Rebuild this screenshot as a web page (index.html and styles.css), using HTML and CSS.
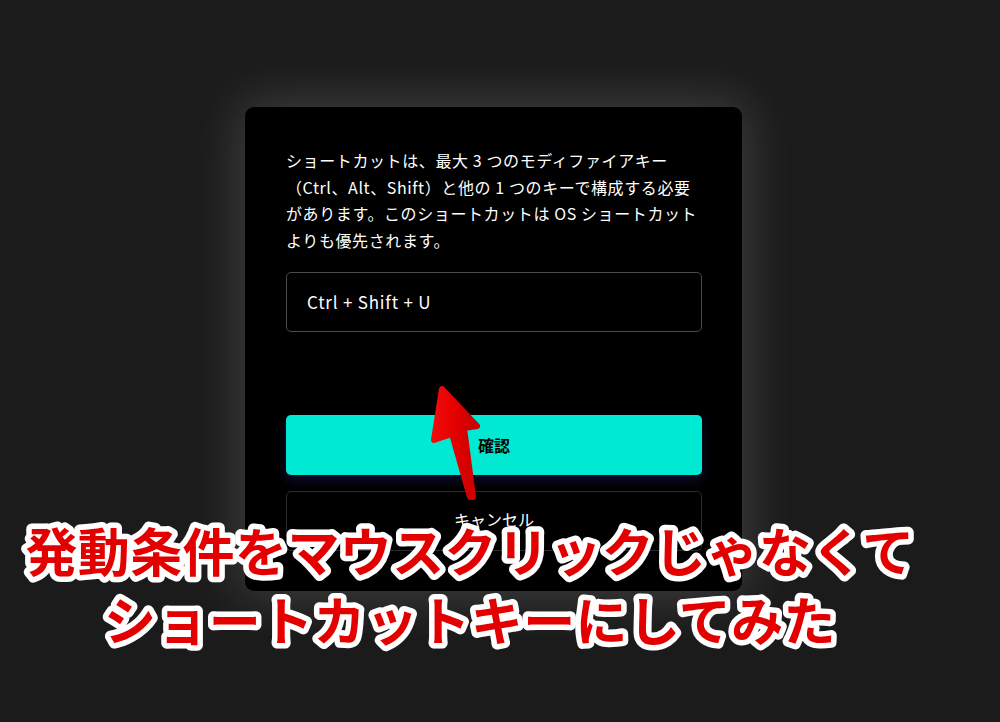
FILE: index.html
```html
<!DOCTYPE html>
<html lang="ja">
<head>
<meta charset="utf-8">
<title>ショートカット設定</title>
<link rel="stylesheet" href="styles.css">
</head>
<body>
<div class="page">
  <div class="card">
    <p class="desc">ショートカットは、最大 3 つのモディファイアキー<br>（Ctrl、Alt、Shift）と他の 1 つのキーで構成する必要<br>があります。このショートカットは OS ショートカット<br>よりも優先されます。</p>
    <div class="keybox">Ctrl + Shift + U</div>
    <div class="spacer"></div>
    <button class="btn btn-primary">確認</button>
    <button class="btn btn-secondary">キャンセル</button>
  </div>
</div>
<svg class="overlay" width="1000" height="722" viewBox="0 0 1000 722">
  <defs>
    <linearGradient id="ag" x1="0" y1="0" x2="1" y2="0">
      <stop offset="0" stop-color="#f20a0a"/>
      <stop offset="0.5" stop-color="#e40000"/>
      <stop offset="1" stop-color="#c80000"/>
    </linearGradient>
  </defs>
  <path class="arrow" d="M442 389 L477 426 L464 428 L473 497 L470 497 L452 434 L434 440 Z"/>
  <text class="caption" x="470" y="572">発動条件をマウスクリックじゃなくて</text>
  <text class="caption" x="470" y="641">ショートカットキーにしてみた</text>
</svg>
</body>
</html>
```

FILE: styles.css
```css
html, body {
  margin: 0;
  padding: 0;
  background: #1b1b1b;
  width: 1000px;
  height: 722px;
  overflow: hidden;
  font-family: "Noto Sans CJK JP", "Noto Sans", sans-serif;
}

.page {
  padding-top: 107px;
  padding-left: 245px;
}

.card {
  width: 497px;
  box-sizing: border-box;
  background: #000;
  border-radius: 9px;
  padding: 40px 40px 40px 41px;
  display: flex;
  flex-direction: column;
  box-shadow: 0 0 50px 6px rgba(255, 255, 255, 0.16);
}

.desc {
  margin: 0;
  color: #fff;
  font-size: 16px;
  font-weight: 400;
  letter-spacing: 0.6px;
  line-height: 26.5px;
  white-space: nowrap;
}

.keybox {
  margin-top: 19px;
  height: 60px;
  box-sizing: border-box;
  border: 1px solid #4a4a4a;
  border-radius: 5px;
  color: #fff;
  font-size: 17px;
  font-weight: 400;
  letter-spacing: 0.8px;
  display: flex;
  align-items: center;
  padding-left: 20px;
  padding-bottom: 2px;
}

.spacer {
  height: 83px;
}

.btn {
  height: 60px;
  width: 100%;
  border-radius: 5px;
  font-family: inherit;
  font-size: 16px;
  display: flex;
  align-items: center;
  justify-content: center;
  cursor: pointer;
}

.btn-primary {
  background: #00e9d3;
  color: #000;
  border: none;
  font-weight: 700;
  padding-right: 6px;
  box-shadow: 0 5px 12px rgba(30, 30, 110, 0.45);
}

.btn-secondary {
  margin-top: 16px;
  background: #000;
  color: #fff;
  border: 1px solid #2c2c2c;
  padding-bottom: 6px;
}

.overlay {
  position: absolute;
  left: 0;
  top: 0;
  pointer-events: none;
}

.arrow {
  fill: url(#ag);
  stroke: url(#ag);
  stroke-width: 6;
  stroke-linejoin: round;
}

.caption {
  font-family: "Noto Sans CJK JP", sans-serif;
  font-weight: 700;
  font-size: 52px;
  letter-spacing: 0.4px;
  text-anchor: middle;
  fill: #e30000;
  stroke: #fff;
  stroke-width: 11px;
  stroke-linejoin: round;
  paint-order: stroke fill;
}
```
